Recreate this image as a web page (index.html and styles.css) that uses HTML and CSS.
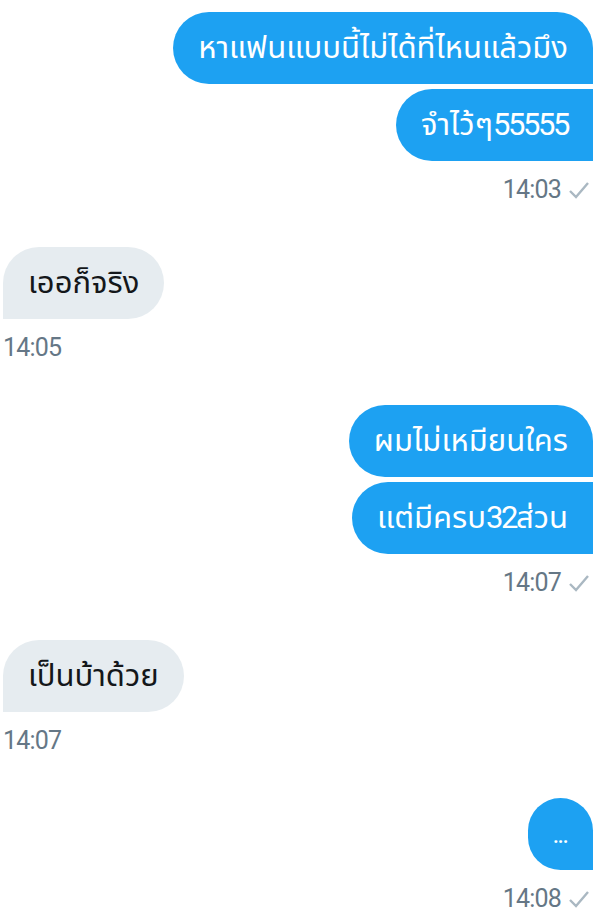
FILE: index.html
```html
<!DOCTYPE html>
<html lang="th">
<head>
<meta charset="utf-8">
<link rel="stylesheet" href="styles.css">
</head>
<body>
<div class="chat">
  <div class="group out">
    <div class="bubble first">หาแฟนแบบนี้ไม่ได้ที่ไหนแล้วมึง</div>
    <div class="bubble last">จำไว้ๆ<span class="num">55555</span></div>
    <div class="meta">14:03 <svg class="check" viewBox="0 0 22 22" width="22" height="22"><polyline points="2,12 8,18 20,4" fill="none" stroke="#aab8c2" stroke-width="2.4"/></svg></div>
  </div>
  <div class="group in">
    <div class="bubble first">เออก็จริง</div>
    <div class="meta">14:05</div>
  </div>
  <div class="group out">
    <div class="bubble first">ผมไม่เหมียนใคร</div>
    <div class="bubble last">แต่มีครบ<span class="num">32</span>ส่วน</div>
    <div class="meta">14:07 <svg class="check" viewBox="0 0 22 22" width="22" height="22"><polyline points="2,12 8,18 20,4" fill="none" stroke="#aab8c2" stroke-width="2.4"/></svg></div>
  </div>
  <div class="group in">
    <div class="bubble first">เป็นบ้าด้วย</div>
    <div class="meta">14:07</div>
  </div>
  <div class="group out">
    <div class="bubble first dots">...</div>
    <div class="meta">14:08 <svg class="check" viewBox="0 0 22 22" width="22" height="22"><polyline points="2,12 8,18 20,4" fill="none" stroke="#aab8c2" stroke-width="2.4"/></svg></div>
  </div>
</div>
</body>
</html>
```
FILE: styles.css
```css
* { box-sizing: border-box; }
html, body { margin: 0; padding: 0; background: #fff; }
body {
  font-family: Roboto, "Noto Sans", "Noto Sans Thai", sans-serif;
  width: 604px;
  height: 916px;
  overflow: hidden;
}
.chat {
  display: flex;
  flex-direction: column;
  gap: 42px;
  padding: 12px 11px 0 3px;
}
.group {
  display: flex;
  flex-direction: column;
  gap: 5px;
}
.group.out { align-items: flex-end; }
.group.in { align-items: flex-start; }
.bubble {
  height: 72px;
  line-height: 72px;
  padding: 0 25px;
  font-size: 31px;
  border-radius: 36px;
  white-space: nowrap;
}
.num { letter-spacing: -2.4px; }
.out .bubble {
  background: #1da1f2;
  color: #fff;
}
.out .bubble.first { border-bottom-right-radius: 0; }
.out .bubble.last { border-top-right-radius: 0; border-bottom-right-radius: 0; }
.in .bubble {
  background: #e6ecf0;
  color: #14171a;
}
.in .bubble.first { border-bottom-left-radius: 0; }
.bubble.dots { font-size: 26px; letter-spacing: -2px; padding: 0 26px 0 24px; }
.meta {
  display: flex;
  align-items: center;
  gap: 7px;
  margin-top: 9px;
  font-size: 25px;
  line-height: 30px;
  letter-spacing: -0.8px;
  color: #657786;
}
.out .meta { padding-right: 3px; }
.check { display: block; }
```
